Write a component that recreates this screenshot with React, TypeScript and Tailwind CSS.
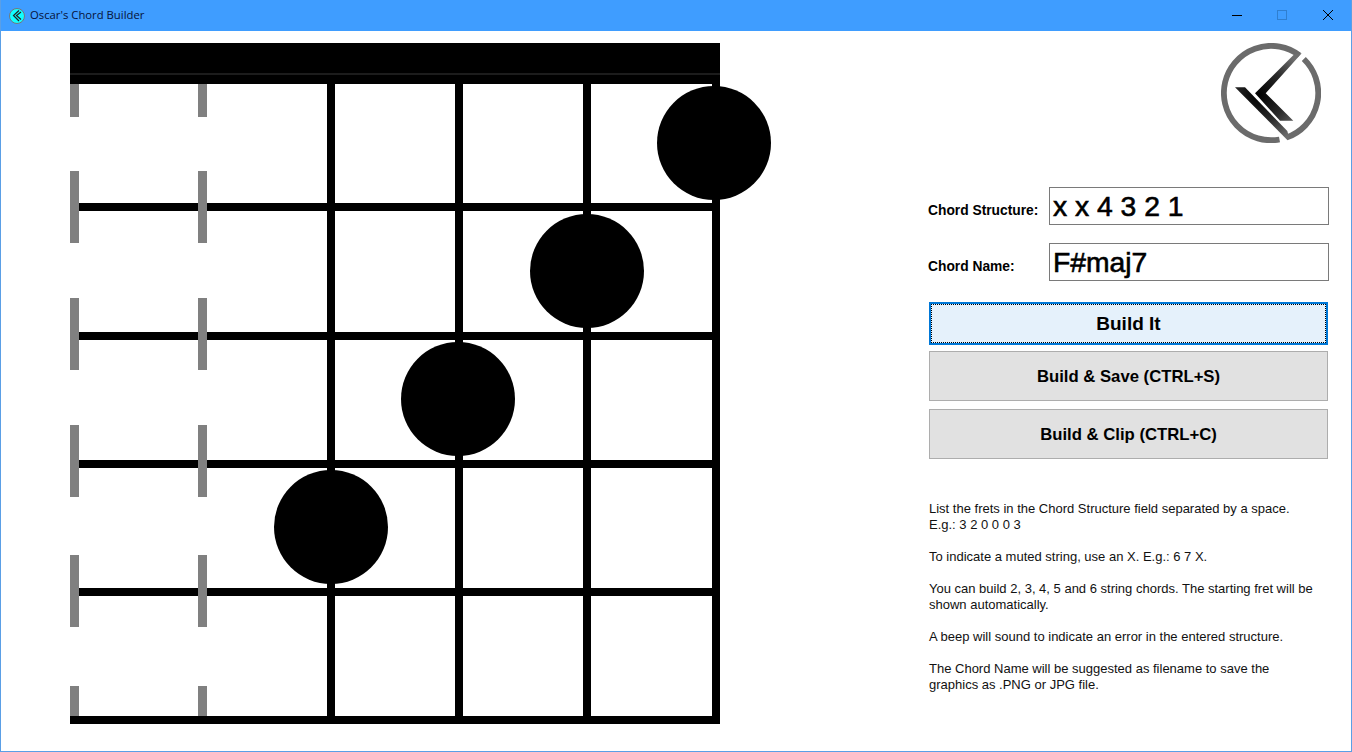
const strings = [
  [70, 9],
  [198, 9],
];
const greySegments = [
  [84, 117],
  [171, 243],
  [298, 370],
  [425, 497],
  [555, 627],
  [686, 716],
];
const blackVerticals = [
  [327, 84, 724, 8],
  [455, 84, 724, 8],
  [583, 84, 724, 8],
  [712, 84, 724, 8],
];
const frets = [203, 332, 460, 588, 716];
const dots = [
  [714, 143],
  [587, 271],
  [458, 399],
  [331, 527],
];

function Board() {
  return (
    <svg width="771" height="693" viewBox="1 31 771 693" className="block shrink-0">
      <rect x="70" y="43" width="650" height="41" fill="#000" />
      <rect x="70" y="73" width="650" height="2" fill="#1c1c1c" />
      {frets.map((y) => (
        <rect key={y} x="70" y={y} width="650" height="8" fill="#000" />
      ))}
      {blackVerticals.map(([x, y1, y2, w]) => (
        <rect key={x} x={x} y={y1} width={w} height={y2 - y1} fill="#000" />
      ))}
      {strings.map(([x, w]) =>
        greySegments.map(([a, b]) => (
          <rect key={`${x}-${a}`} x={x} y={a} width={w} height={b - a} fill="#808080" />
        )),
      )}
      {dots.map(([cx, cy]) => (
        <circle key={cx} cx={cx} cy={cy} r="57" fill="#000" />
      ))}
    </svg>
  );
}

function Logo({ size }: { size: number }) {
  return (
    <svg width={size} height={size} viewBox="0 0 100 100" className="block">
      <defs>
        <radialGradient id="kg" gradientUnits="userSpaceOnUse" cx="38" cy="52" r="50">
          <stop offset="0" stopColor="#000" />
          <stop offset="0.55" stopColor="#2a2a2a" />
          <stop offset="1" stopColor="#6e6e6e" />
        </radialGradient>
      </defs>
      {/* ring, left and top part */}
      <path d="M78.4 12.3 A47.2 47.2 0 1 0 58.5 96.5" fill="none" stroke="#6b6b6b" strokeWidth="5.8" />
      {/* ring, right part */}
      <path d="M82.8 16 A47.2 47.2 0 0 1 65.4 94.6" fill="none" stroke="#6b6b6b" strokeWidth="5.8" />
      {/* upper chevron */}
      <polygon points="34,50.3 73,11.5 80.7,10.3 44.7,50.3 72.3,77.7 59,77.7" fill="url(#kg)" />
      {/* lower bar */}
      <polygon points="14,44.3 24,44.3 66.3,88 68,94 66.3,97" fill="url(#kg)" />
    </svg>
  );
}

function Field({ label, value }: { label: string; value: string }) {
  return (
    <div className="flex items-center h-[38px]">
      <div className="w-[120px] -ml-px mr-px pt-[11px] text-[13.8px] font-bold text-black whitespace-nowrap">{label}</div>
      <div className="w-[280px] h-[38px] border border-[#7a7a7a] bg-white pl-[3px] pt-px flex items-center text-[28.3px] leading-none text-black [-webkit-text-stroke:0.6px_#000]">
        {value}
      </div>
    </div>
  );
}

function Btn({ children }: { children: string }) {
  return (
    <button className="w-[399px] h-[50px] pt-[1px] bg-[#e1e1e1] border border-[#adadad] text-[16.7px] font-bold text-black">
      {children}
    </button>
  );
}

const paragraphs = [
  ["List the frets in the Chord Structure field separated by a space.", "E.g.: 3 2 0 0 0 3"],
  ["To indicate a muted string, use an X. E.g.: 6 7 X."],
  ["You can build 2, 3, 4, 5 and 6 string chords. The starting fret will be", "shown automatically."],
  ["A beep will sound to indicate an error in the entered structure."],
  ["The Chord Name will be suggested as filename to save the", "graphics as .PNG or JPG file."],
];

export default function App() {
  return (
    <div className="w-[1352px] h-[752px] flex flex-col bg-white overflow-hidden border-x border-b border-[#5a9fe6] font-['Liberation_Sans',sans-serif]">
      <div className="h-[31px] -mx-px bg-[#3f9dff] flex items-center shrink-0">
        <div className="ml-[9px] w-[16px] h-[16px] rounded-full bg-[#1ff] border border-[#777] flex items-center justify-center">
          <svg width="14" height="14" viewBox="0 0 14 14">
            <path d="M9 1.5 L3.5 6.5 L9 12 M11 3 L6.5 6.5 L11 10.5" fill="none" stroke="#222" strokeWidth="1.2" />
          </svg>
        </div>
        <span className="ml-[5px] text-[11.3px] text-[#06123a] font-['Open_Sans',sans-serif]">Oscar's Chord Builder</span>
        <div className="ml-auto flex items-center">
          <svg width="46" height="31" viewBox="0 0 46 31">
            <rect x="18" y="15" width="10" height="1" fill="#000" />
          </svg>
          <svg width="46" height="31" viewBox="0 0 46 31">
            <rect x="17.5" y="10.5" width="9" height="9" fill="none" stroke="#2f7fd0" />
          </svg>
          <svg width="46" height="31" viewBox="0 0 46 31">
            <path d="M17 10 L27 20 M27 10 L17 20" stroke="#000" strokeWidth="1" fill="none" />
          </svg>
        </div>
      </div>
      <div className="flex flex-1 min-h-0">
        <Board />
        <div className="ml-[157px] w-[400px] flex flex-col">
          <div className="flex justify-end pr-[8px] pt-[12px] h-[156px]">
            <Logo size={100} />
          </div>
          <div className="flex flex-col gap-[18px]">
            <Field label="Chord Structure:" value="x x 4 3 2 1" />
            <Field label="Chord Name:" value="F#maj7" />
          </div>
          <div className="mt-[21px] flex flex-col">
            <button className="w-[399px] h-[43px] pt-px bg-[#e5f1fb] border-2 border-[#0078d7] outline-1 outline-dotted outline-black -outline-offset-3 text-[19px] font-bold text-black">
              Build It
            </button>
            <div className="mt-[6px]">
              <Btn>{"Build & Save (CTRL+S)"}</Btn>
            </div>
            <div className="mt-2">
              <Btn>{"Build & Clip (CTRL+C)"}</Btn>
            </div>
          </div>
          <div className="mt-[42px] flex flex-col gap-4 text-[13px] leading-4 text-[#111]">
            {paragraphs.map((lines) => (
              <div key={lines[0]}>
                {lines.map((l) => (
                  <div key={l} className="whitespace-nowrap">{l}</div>
                ))}
              </div>
            ))}
          </div>
        </div>
      </div>
    </div>
  );
}
